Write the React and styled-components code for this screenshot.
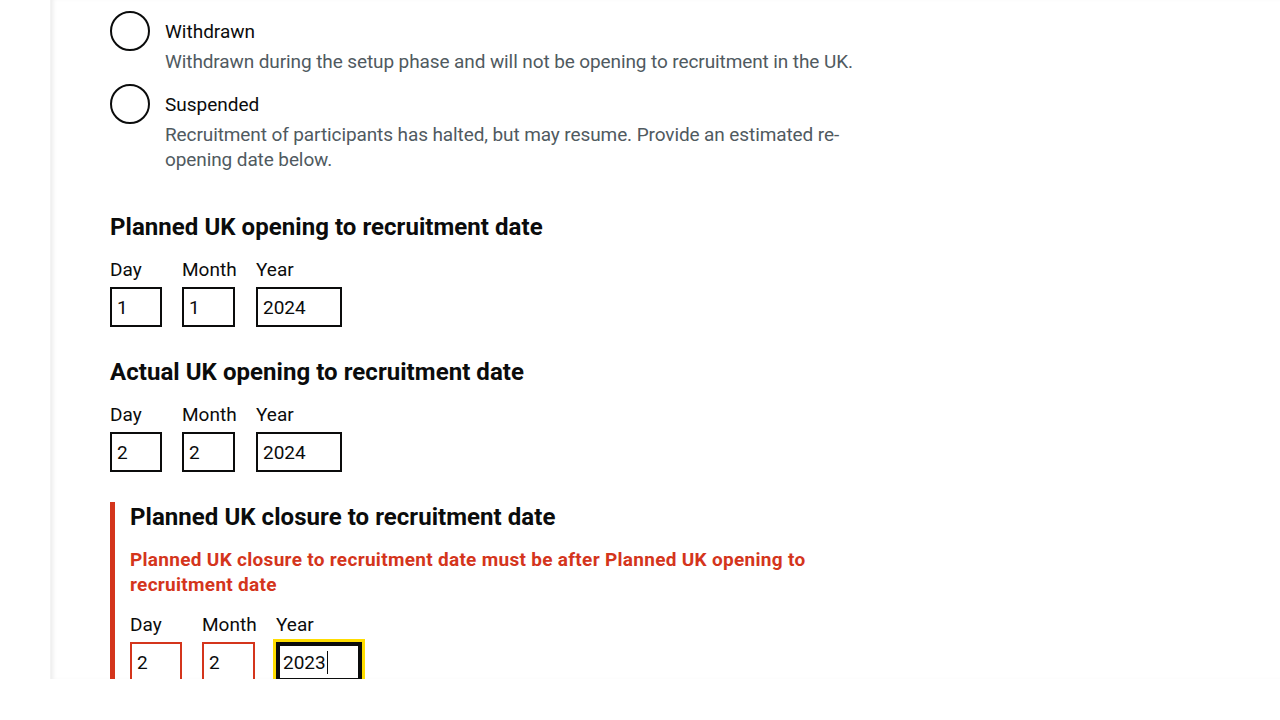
import styled, { createGlobalStyle, css } from "styled-components";

const GlobalStyle = createGlobalStyle`
  html, body {
    margin: 0;
    padding: 0;
    background: #fff;
  }
  body {
    font-family: Roboto, "Liberation Sans", Arial, sans-serif;
    color: #0b0c0c;
    -webkit-font-smoothing: antialiased;
  }
  * { box-sizing: border-box; }
`;

const Page = styled.div`
  height: 679px;
  overflow: hidden;
  margin-left: 50px;
  box-shadow: inset 4px 0 4px -2px rgba(0, 0, 0, 0.08);
  border-left: 1px solid #f3f3f3;
`;

const Main = styled.main`
  width: 820px;
  padding: 11px 0 0 59px;
`;

const Radios = styled.div`
  margin-bottom: 40px;
`;

const RadioItem = styled.div`
  position: relative;
  padding-left: 40px;
  min-height: 40px;
  margin-bottom: 10px;
`;

const RadioCircle = styled.span`
  position: absolute;
  left: 0;
  top: 0;
  width: 40px;
  height: 40px;
  border: 2px solid #0b0c0c;
  border-radius: 50%;
  background: #fff;
`;

const RadioLabel = styled.label`
  display: block;
  padding: 8px 15px 5px;
  font-size: 19px;
  line-height: 25px;
`;

const Hint = styled.div`
  padding-left: 15px;
  font-size: 19px;
  line-height: 25px;
  letter-spacing: -0.1px;
  color: #505a5f;
  max-width: 750px;
`;

const FormGroup = styled.fieldset`
  border: 0;
  margin: 0 0 30px;
  padding: 0;
  min-width: 0;
  ${(p) =>
    p.$error &&
    css`
      border-left: 5px solid #d4351c;
      padding-left: 15px;
    `}
`;

const Legend = styled.h2`
  margin: 0 0 15px;
  font-size: 24px;
  line-height: 30px;
  font-weight: 700;
  letter-spacing: 0.05px;
`;

const ErrorMessage = styled.p`
  margin: 0 0 15px;
  font-size: 19px;
  line-height: 25px;
  font-weight: 700;
  letter-spacing: 0.3px;
  color: #d4351c;
  max-width: 700px;
`;

const DateRow = styled.div`
  display: flex;
  gap: 20px;
`;

const DateItem = styled.div`
  position: relative;
  display: flex;
  flex-direction: column;
  width: ${(p) => p.$w}px;
`;

const DateLabel = styled.label`
  font-size: 19px;
  line-height: 25px;
  margin-bottom: 5px;
  white-space: nowrap;
`;

const DateInput = styled.input`
  width: ${(p) => p.$w}px;
  height: 40px;
  padding: 5px;
  border: 2px solid ${(p) => (p.$error ? "#d4351c" : "#0b0c0c")};
  border-radius: 0;
  font-family: inherit;
  font-size: 19px;
  line-height: 25px;
  color: #0b0c0c;
  background: #fff;
  outline: none;
  ${(p) =>
    p.$focused &&
    css`
      border-color: #0b0c0c;
      outline: 3px solid #ffdd00;
      outline-offset: 0;
      box-shadow: inset 0 0 0 2px #0b0c0c;
    `}
`;

/* text caret shown in the focused field */
const Caret = styled.span`
  position: absolute;
  left: ${(p) => p.$x}px;
  top: 39px;
  width: 1px;
  height: 23px;
  background: #0b0c0c;
`;

const parts = [
  { label: "Day", item: 52, w: 52 },
  { label: "Month", item: 54, w: 53 },
  { label: "Year", item: 86, w: 86 },
];

function DateField({ title, values, error, focusYear, errorText }) {
  return (
    <FormGroup $error={error}>
      <Legend>{title}</Legend>
      {errorText && <ErrorMessage>{errorText}</ErrorMessage>}
      <DateRow>
        {parts.map((part, i) => {
          const focused = focusYear && i === 2;
          return (
            <DateItem key={part.label} $w={part.item}>
              <DateLabel>{part.label}</DateLabel>
              <DateInput
                $w={part.w}
                defaultValue={values[i]}
                $error={error && !focused}
                $focused={focused}
                inputMode="numeric"
              />
              {focused && <Caret $x={51} />}
            </DateItem>
          );
        })}
      </DateRow>
    </FormGroup>
  );
}

export default function App() {
  return (
    <>
      <GlobalStyle />
      <Page>
        <Main>
          <Radios>
            <RadioItem>
              <RadioCircle />
              <RadioLabel>Withdrawn</RadioLabel>
              <Hint>
                Withdrawn during the setup phase and will not be opening to
                recruitment in the UK.
              </Hint>
            </RadioItem>
            <RadioItem>
              <RadioCircle />
              <RadioLabel>Suspended</RadioLabel>
              <Hint>
                Recruitment of participants has halted, but may resume. Provide
                an estimated re-opening date below.
              </Hint>
            </RadioItem>
          </Radios>

          <DateField
            title="Planned UK opening to recruitment date"
            values={["1", "1", "2024"]}
          />
          <DateField
            title="Actual UK opening to recruitment date"
            values={["2", "2", "2024"]}
          />
          <DateField
            title="Planned UK closure to recruitment date"
            values={["2", "2", "2023"]}
            error
            focusYear
            errorText="Planned UK closure to recruitment date must be after Planned UK opening to recruitment date"
          />
        </Main>
      </Page>
    </>
  );
}
